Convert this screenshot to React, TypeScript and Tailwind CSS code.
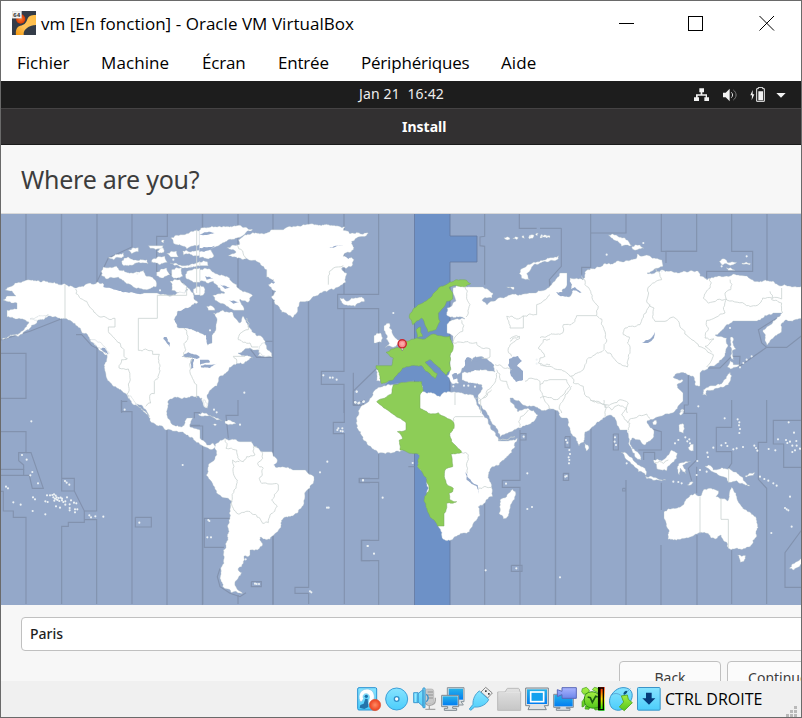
import React from "react";

/* ---------- map geometry ---------- */

type Pt = [number, number];

// Splits each edge and nudges the midpoints, so coasts look ragged.
// Edges that run exactly along an axis stay straight.
function coast(src: string, rough: number, min: number, closed: boolean): string {
  const pts: Pt[] = src.trim().split(/\s+/).map((p) => p.split(",").map(Number) as Pt);
  let seed = 7;
  const rnd = () => {
    seed = (seed * 16807) % 2147483647;
    return seed / 2147483647 - 0.5;
  };
  const out: Pt[] = [];
  const split = (a: Pt, b: Pt) => {
    const dx = b[0] - a[0];
    const dy = b[1] - a[1];
    const len = Math.hypot(dx, dy);
    if (len < min || dx === 0 || dy === 0) {
      out.push(b);
      return;
    }
    const k = (rnd() * rough * Math.min(len, min * 3)) / len;
    const m: Pt = [(a[0] + b[0]) / 2 - dy * k, (a[1] + b[1]) / 2 + dx * k];
    split(a, m);
    split(m, b);
  };
  out.push(pts[0]);
  for (let i = 1; i < pts.length; i++) split(pts[i - 1], pts[i]);
  if (closed) split(pts[pts.length - 1], pts[0]);
  return "M" + out.map((p) => p[0].toFixed(1) + " " + p[1].toFixed(1)).join("L") + (closed ? "Z" : "");
}

interface Sheet {
  at: Pt;
  scale: number;
  land?: string[];
  green?: string[];
  water?: string[];
  borders?: string[];
  zones?: string[];
  dots?: string;
}

const T = 1 / 3;

const SHEETS: Sheet[] = [
  {
    at: [0, 0],
    scale: 1,
    land: [
      "2,339 20,333 29,322 25,320 17,319 7,317 7,310 17,309 17,303 3,300 7,296 16,296 12,291 5,290 15,283 30,280 40,282 63,284 75,288 97,282 107,286 127,290 143,293 157,293 167,295 177,293 188,290 180,281 187,287 194,296 198,303 186,308 178,311 174,320 179,328 186,328 193,330 200,333 206,335 207,345 212,343 212,335 216,328 217,320 213,313 223,310 233,313 240,323 243,316 250,328 257,336 263,338 265,345 270,353 272,357 258,356 260,350 250,348 238,353 247,355 253,358 243,364 233,365 228,371 220,376 217,386 207,395 208,406 206,408 202,398 198,396 187,398 178,397 168,401 167,413 173,425 182,427 187,418 193,418 190,427 200,430 200,438 207,445 213,443 216,447 213,449 205,447 193,438 183,432 167,430 150,421 147,412 143,407 136,404 127,395 113,386 106,376 104,365 107,355 97,346 88,336 77,326 67,319 50,316 38,320 30,328 17,336",
      "453,288 462,285 470,287 483,287 493,293 492,298 482,300 487,305 497,299 510,295 532,293 545,290 550,286 555,281 560,273 567,273 567,285 560,294 569,297 572,291 570,278 583,280 587,270 602,266 617,261 635,259 637,254 650,256 662,260 663,266 647,273 663,270 673,272 698,271 700,276 707,280 720,276 733,274 747,276 753,280 773,281 778,285 803,286 803,318 787,320 782,323 780,333 767,345 763,330 773,321 782,313 773,313 763,318 757,321 733,321 722,330 715,335 727,338 728,346 720,360 712,366 700,373 700,386 695,385 693,376 688,375 680,373 673,377 683,380 677,385 683,393 683,401 675,411 669,414 655,418 647,421 647,423 654,432 653,438 645,445 640,440 632,438 630,443 640,455 641,460 635,457 629,445 627,430 620,430 613,417 610,415 603,418 585,432 584,442 579,446 570,430 567,418 562,418 555,410 540,409 523,405 513,398 510,398 512,403 518,412 528,408 538,415 532,422 520,428 500,437 498,433 487,413 478,402 478,395 482,385 473,383 462,380 462,373 473,371 483,370 495,372 494,365 483,357 473,358 465,366 461,372 457,376 459,383 453,384 447,376 450,370 450,356 453,346 453,336 447,333 447,325 453,320 465,319 448,316 447,308 456,301 453,293",
    ],
    water: [
      "176,317 180,311 188,308 198,303 203,304 205,309 212,310 215,318 215,326 211,334 212,342 207,344 206,335 200,332 190,329 179,327 175,322",
      "465,360 468,357 472,359 471,362 480,360 487,359 494,366 488,369 480,369 472,371 464,370",
      "509,359 518,356 522,361 517,366 523,371 523,380 516,382 511,376 510,369 508,365",
      "642,343 650,339 655,332 654,338 648,343",
    ],
  },
  {
    at: [0, 213],
    scale: T,
    land: [
      "305,188 310,162 350,160 358,172 380,178 430,172 440,190 465,200 468,222 440,230 400,222 380,212 355,192 320,198",
      "325,135 370,120 372,130 340,140", "365,145 385,132 410,142 440,140 445,152 400,155 372,158", "385,112 415,104 415,116 395,122",
      "445,98 490,98 482,108 450,106", "472,115 490,105 492,118 478,120", "458,138 495,130 502,148 480,155 455,148",
      "512,75 545,65 575,55 600,52 600,94 560,108 545,98 520,90", "500,122 530,115 535,132 512,132", "510,150 545,158 600,145 600,160 540,162",
      "470,178 500,165 510,185 490,195 470,188", "515,170 545,165 548,190 530,196 515,190", "556,185 570,172 600,165 600,208 580,208 560,198", "510,205 540,200 560,220 555,240 515,232",
      "548,114 570,117 600,110 600,128 550,127", "483,84 493,82 491,90", "580,228 600,222 600,246 584,246",
      "268,380 285,380 318,405 328,420 320,425 290,400", "382,545 400,560 450,610 440,600 425,590 400,575", "90,318 145,305 130,320 105,322",
    ],
    water: ["492,372 500,372 503,385 510,390 509,402 500,390 490,378", "545,432 565,418 590,425 600,432 590,438 565,433", "572,440 582,438 580,465 573,468", "300,408 315,405 325,425", "315,202 370,220 430,236 430,242 380,238 310,222"],
    borders: ["195,215 195,317", "227,228 228,242 260,265 278,290 300,312 345,316 345,342 325,342 325,355 340,372 360,390 372,410 372,430 382,437 365,440 357,465 385,468 386,520 380,545", "560,222 560,247 472,247 472,316 415,316 415,412 458,414 458,424 478,424 480,460 475,495 463,505 463,542 450,545 452,570 437,580", "552,345 560,360 563,380 552,392 557,410 550,430 578,435 570,460 575,490 590,515 590,555", "590,50 590,240"],
    zones: ["396,0 396,102 325,135 290,208", "502,0 502,70 470,70 470,175 520,185 560,222", "563,345 563,292 582,255", "0,382 90,355 185,317", "228,365 245,365 275,398 318,420", "3,421 78,421 78,556 3,556", "382,565 365,565 365,600"],
    dots: "412,182 480,232 520,140 573,160",
  },
  {
    at: [200, 213],
    scale: T,
    land: [
      "-2,52 10,44 60,40 110,38 158,50 135,62 110,75 80,85 50,100 30,108 38,120 40,132 20,137 -2,134",
      "0,148 22,146 25,158 0,158", "0,170 30,168 55,185 80,190 110,215 120,230 158,248 145,268 120,258 125,275 132,292 105,292 80,280 45,262 38,248 75,240 60,225 40,205 20,210 0,205",
      "0,217 15,230 10,246 0,248", "20,280 40,282 45,292 25,292",
      "80,105 118,95 115,80 135,65 200,60 215,50 250,50 270,40 330,33 380,34 435,42 430,52 450,62 505,60 470,75 455,85 460,110 430,130 462,140 455,160 425,165 440,180 437,208 415,222 400,230 360,240 330,262 300,266 290,300 278,314 262,303 245,298 228,275 215,250 228,235 205,215 222,200 200,193 200,170 180,150 140,136 85,128 108,118",
      "420,255 440,265 455,255 485,252 494,265 465,281 440,276 425,268",
      "178,400 195,390 200,408 215,420 215,432 190,428 175,418",
    ],
    borders: ["110,95 138,138", "140,315 145,350 120,362 115,380 130,388 150,390 155,402 175,402", "385,215 385,190 400,165 430,158", "135,430 100,430 110,450"],
    zones: ["536,0 536,244 413,244 413,287 536,287 536,455", "152,410 170,433 218,433", "195,385 218,385", "432,287 432,475 364,475 364,514 432,514 432,600", "460,577 490,577", "528,468 460,534 460,577"],
    water: ["0,440 25,440 30,448 0,455", "2,458 30,455 50,452 30,465 5,464", "115,420 140,420 155,425 125,428", "205,205 225,207 220,212", "430,128 455,130 445,138", "385,105 430,96 400,104", "-2,64 30,56 48,60 20,66", "-2,106 30,102 50,96 28,112 -2,116", "15,190 40,197 20,200", "60,215 90,225 75,228", "85,262 118,268 100,272"],
    dots: "133,539 370,487 390,494 398,494 410,500 470,536 465,568 476,570 490,567 42,590 50,598 30,352",
  },
  {
    at: [350, 213],
    scale: T,
    land: [
      "102,338 120,332 118,345 126,352 132,370 148,382 138,400 105,403 118,392 108,378 112,368 102,352", "72,368 92,360 98,375 94,388 72,390",
      "78,470 92,470 90,505 80,503", "508,182 520,165 550,148 600,134 626,128 625,137 570,150 545,162 530,182 540,202 515,196", "470,222 492,222 490,230",
      "462,74 480,76 478,80 466,79", "488,76 505,74 500,80", "515,72 522,68 524,76", "535,72 552,66 548,76 538,78", "556,64 565,61 562,68",
    ],
    green: [
      "180,302 205,275 240,255 265,225 300,207 318,200 350,202 362,212 345,222 310,218 298,222 308,240 308,258 290,265 282,282 265,300 270,325 258,350 235,358 222,325 215,315 188,335 178,315",
      "198,350 212,342 212,358 218,370 202,374",
      "152,388 172,385 200,375 225,378 250,363 300,370 310,400 300,430 302,470 288,487 270,465 240,440 225,448 262,482 255,497 215,458 180,460 158,465 145,480 130,500 95,512 88,480 78,466 78,458 125,458 130,435 108,418 118,415 125,408 150,405",
    ],
    borders: ["345,220 350,250 360,275 355,300 348,312", "335,322 338,355 315,372 310,390 380,388 395,405 420,408 420,432 395,435", "470,310 500,318 520,308 520,345 480,345 470,310", "520,310 560,305 560,275 600,245", "480,385 500,375 510,370", "485,430 475,405 490,388 510,375 500,368 480,378", "600,455 565,450 570,435 585,430 565,405 580,380 600,378", "435,455 460,465 485,470", "440,470 450,500 470,505 480,530", "525,505 550,497 570,505 570,530 580,550 600,590", "400,555 430,515 440,480", "375,555 392,560 392,600"],
    zones: ["508,0 508,46 560,46", "404,0 404,70 390,72 390,98 404,100 404,215", "600,205 600,222 615,212"],
    water: ["305,485 320,480 325,495 310,500", "335,515 350,510 375,512 375,520 350,520"],
    dots: "130,300 342,518 355,518 375,521 560,440 560,452 310,520 540,70 575,68 590,72",
  },
  {
    at: [540, 213],
    scale: T,
    land: [
      "205,66 230,67 255,75 275,97 245,100 225,82", "275,102 300,96 312,106 285,112", "538,145 555,138 562,148 590,147 580,155 545,156", "605,150 632,152 628,156 608,154", "558,164 585,172 565,172",
      "572,372 580,376 582,400 588,408 578,412 580,440 572,430 570,400", "570,443 580,455 598,455 590,462 572,468 562,462", "570,478 572,500 565,515 552,522 515,532 498,535 500,548 488,545 490,530 520,518 545,512 560,490", "0,70 30,68 30,74 0,75", "420,600 428,588 432,592 425,605",
    ],
    borders: ["0,374 68,360 70,335 100,330 110,308 170,308 185,318 192,350 200,380 192,410 165,425 140,440 130,470 90,490 60,470 45,468 30,460 0,455", "125,190 135,215 152,235 158,260 175,280 170,308", "195,412 225,440 262,462 265,430 270,410 262,390 268,372 250,365 255,345 300,335 318,300 330,275", "345,165 365,200 325,222 322,270 342,285 345,325 375,325 400,312 430,350 445,372 490,405 500,412 520,425 500,462", "508,195 510,225 490,255 505,270 560,258 555,300 500,322 505,345 495,375 522,378 495,400 515,418", "570,200 572,230 555,240 562,262 620,278 660,270 668,255 725,258 725,225", "690,235 695,260 725,270 728,300", "95,490 100,510 130,520 138,550 195,575 240,560 265,570 262,600", "0,515 30,500 80,500 90,520 75,540 45,560 0,555", "65,600 60,575 95,520"],
    zones: ["64,46 64,160 28,200 30,240", "0,46 64,46", "152,60 258,60 258,0", "152,0 152,163 125,163 125,185", "364,0 364,115 470,115", "470,0 470,115 378,115 378,150", "575,0 575,115 638,115 638,175 500,175 500,195", "720,310 655,350 665,390 680,403", "680,403 740,403 785,368", "445,485 445,575", "490,465 540,465 575,430 600,430 598,460 680,403"],
    water: ["48,238 78,240 85,252 62,250", "82,200 95,215 90,230 105,222 125,240 100,232 88,245 80,225"],
    dots: "620,130 545,160 200,125 310,90 365,175 570,345 600,463 610,450 620,440 635,430 475,580",
  },
  {
    at: [0, 400],
    scale: T,
    zones: ["3,95 78,95 78,158 56,158 56,182 71,195 71,208 3,208", "71,208 71,226 3,226", "78,158 93,158 130,265 97,265 88,226 71,226", "3,274 10,274 10,333 40,333 40,352 78,352 78,612", "185,235 223,235 223,273 185,273 185,0", "223,273 253,333 290,333 290,0", "253,333 253,367 205,367 205,379 185,379 185,612", "253,359 290,359 290,612", "364,0 364,35 396,35 396,612", "406,352 454,352 454,381 406,381 406,352", "600,38 583,38 583,55", "572,76 600,76"],
    dots: "94,64 66,165 80,179 97,216 91,226 114,250 18,260 24,265 40,307 62,314 99,292 105,298 98,333 136,343 136,304 143,306 141,286 150,286 157,285 162,283 167,287 160,292 165,296 170,298 176,294 182,293 186,301 178,303 170,292 190,306 196,314 201,292 163,302 173,300 186,296 196,304 168,319 180,323 209,313 209,324 213,301 222,308 229,310 225,328 232,328 225,337 209,331 195,243 200,248 208,254 268,346 273,352 286,349 310,350 418,368 374,29 548,195",
  },
  {
    at: [190, 400],
    scale: T,
    land: [
      "75,140 80,130 105,115 120,120 135,118 150,125 185,125 192,138 215,155 245,155 262,180 255,200 285,202 310,210 345,210 372,230 370,250 347,275 342,310 325,335 280,355 270,385 240,418 210,412 218,435 205,448 180,450 180,465 162,468 160,490 145,505 155,518 135,545 140,565 158,580 125,578 98,560 90,535 95,500 102,490 100,450 115,400 120,350 127,305 90,285 65,245 48,225 55,195 75,170 80,155",
      "25,43 50,40 75,52 97,62 80,60 50,48 30,47", "105,63 125,64 138,71 115,74 105,70", "38,0 45,0 52,25 42,20", "68,73 80,74 74,77",
    ],
    borders: ["105,118 108,145 140,150 148,180 160,185 170,170 195,165 190,140 200,140", "148,185 128,180 130,220 142,240 132,270 130,325 145,342 180,335 210,355 218,370 235,368 240,345 262,318 245,300 265,270 265,254 215,250 208,235 220,205 203,190 218,175 215,155"],
    zones: ["144,0 144,46 108,46 115,115", "0,78 38,78 38,612", "122,355 43,355 43,442 102,442", "249,0 249,612", "144,585 144,612", "90,505 82,530 90,560 120,580 150,590 168,578", "463,0 463,67 430,67 430,101 463,101 463,612", "184,545 214,545 214,560 184,560 184,545", "356,0 356,562 315,562 315,580 356,580 356,612", "540,235 508,235 508,248 540,248", "540,421 515,421 515,482 540,482", "492,0 492,16 520,16 520,0"],
    water: ["250,195 262,190 280,195 265,202"],
    dots: "412,185 390,217 411,323 416,323 519,241 533,438 55,360 58,363 52,412 63,412 445,85 452,93 457,85 458,94 442,90 195,551 200,552 207,552 360,574 364,577 497,8 505,10 520,5 150,74 167,478",
  },
  {
    at: [350, 370],
    scale: T,
    land: [
      "100,48 130,45 210,35 220,65 245,68 270,80 282,67 330,68 370,75 378,90 400,135 425,180 445,213 470,213 502,205 495,230 470,260 430,290 415,315 425,345 427,380 385,410 390,435 370,460 350,490 310,505 280,508 265,470 245,440 225,390 235,355 230,325 203,290 208,255 170,240 85,250 40,210 25,180 20,150 30,115 60,85 75,60",
      "488,358 497,375 485,400 475,438 460,446 447,430 450,390 470,380",
    ],
    green: ["130,45 180,35 215,35 220,62 210,75 210,115 235,130 265,128 310,155 312,175 300,190 305,215 335,248 303,252 308,290 285,300 283,320 292,345 310,355 308,365 297,370 300,390 320,395 290,400 287,425 282,430 282,468 262,468 245,445 222,390 237,355 230,325 203,290 208,255 180,250 150,240 148,210 158,205 142,185 168,180 168,158 80,95 125,72"],
    borders: ["315,68 315,105", "310,155 316,140 400,140", "335,248 355,255 350,280 352,310", "385,355 425,353", "425,60 385,95", "495,200 445,210", "510,170 512,140 535,120"],
    water: ["346,305 352,320 370,340 383,345 385,372 381,350 365,342 350,330"],
    zones: ["86,252 86,326 28,326 28,337 86,337 86,511 34,511 34,572 86,572 86,704", "404,400 404,704", "510,180 510,331 457,331 457,352 510,352 510,704", "510,191 528,191 528,210 510,210", "484,586 516,586 516,604 484,604 484,586", "10,8 10,105 45,90", "175,290 193,290"],
    dots: "188,279 39,331 98,383 53,528 72,551 407,601 499,595 468,341 532,310 532,417 546,411 521,200 20,65 16,96 28,98 42,94",
  },
  {
    at: [540, 400],
    scale: T,
    land: [
      "372,335 400,325 430,315 438,298 465,280 480,288 492,268 508,265 535,272 528,290 562,303 568,290 575,262 588,280 592,300 602,315 640,345 653,375 650,405 630,440 600,447 565,445 555,425 543,405 525,418 500,400 470,402 435,415 400,420 385,418 387,390 372,355",
      "593,465 604,469 617,467 612,484 601,487", "748,505 770,485 788,468 788,490 762,510", "495,198 515,200 520,210 545,203 570,207 595,222 608,232 630,258 605,250 590,242 568,247 550,230 530,220 510,210",
      "340,180 365,182 395,150 412,160 402,185 380,212 350,205", "243,157 262,163 290,190 315,205 318,226 295,215 270,185", "315,230 350,234 378,240 345,241 320,236", "412,200 425,188 452,184 428,196 438,222 428,215 420,205 418,224",
      "420,72 432,74 430,100 418,96", "445,142 460,133 460,153 448,150", "134,130 147,145 138,153", "428,28 422,46 418,40", "338,66 350,62 348,74 340,74", "615,228 645,218 640,226 618,232", "442,255 460,246 450,256",
    ],
    borders: ["480,290 480,400", "543,295 543,358 565,358 565,443", "566,205 566,248", "262,68 280,55 320,42 330,55", "192,0 195,50", "192,20 215,30 235,15 260,25 245,45 270,70 265,90", "150,0 200,18", "345,188 370,190 385,180"],
    zones: ["330,85 364,95 364,150 295,150", "311,180 311,157 344,157 344,180", "445,15 433,15 433,40 470,40 470,180 445,205 455,242", "575,0 575,82 529,82 529,155 575,155 575,190 565,205", "680,0 680,127 655,127 655,238 680,265 680,612", "785,61 700,61 700,132 731,132 731,202 785,202", "785,390 735,458 735,562 785,562", "364,248 364,330", "470,200 470,280", "575,450 575,612", "248,265 256,265 256,273 248,273 248,265", "220,102 235,102 235,150 220,150 220,102", "75,110 90,110 90,142 75,142 75,110", "70,220 86,220 86,241 70,241 70,220"],
    dots: "554,55 593,58 598,67 597,76 600,87 598,99 520,143 544,136 557,129 562,138 502,158 504,171 580,148 590,145 609,141 643,137 648,144 652,152 686,147 706,151 746,67 762,98 714,118 738,120 742,129 750,125 757,137 769,123 770,137 757,156 765,151 780,146 694,399 755,380 735,324 740,328 745,331 60,532 78,120 82,128 88,150 90,162 86,172 88,180 87,190 76,230 80,228 225,112 224,125 228,135 436,112 442,124 448,118 450,130 405,130 415,120 480,210 472,183 660,230 673,237 685,242 700,250 710,257 750,290 400,245 415,246 425,250 265,95 260,190 470,225 500,215",
  },
];

// Meridians as [x, end y] from the top edge, and [x, start y] to the bottom edge.
const TOP_MERIDIANS = [[26, 280], [61.5, 284], [97, 283], [238, 310], [273, 610], [308.5, 400], [344, 294], [767, 281]];
const LOW_MERIDIANS = [[202.5, 450], [555.5, 408], [591, 425], [626, 480], [661, 545], [697, 535], [167, 430]];

function WorldMap() {
  return (
    <svg className="block h-[391px] w-full" viewBox="1 214 800 391" preserveAspectRatio="none">
      <rect x="0" y="213" width="803" height="393" fill="#94a8c9" />
      <path d="M414.500 213H450V236H477V262H450V606H414.500Z" fill="#6d91c7" stroke="#64799f" strokeWidth=".8" />
      <path d="M385 385L398 372L405 364L425 362L445 373L447 382L450 394L442 397L422 390L418 380L393 384Z" fill="#6d91c7" />
      <g stroke="#8495b2" strokeWidth="1.4" fill="none">
        {TOP_MERIDIANS.map(([x, y]) => <path key={x + "t"} d={`M${x} 213V${y}`} />)}
        {LOW_MERIDIANS.map(([x, y]) => <path key={x + "l"} d={`M${x} ${y}V606`} />)}
        <path d="M61.500 319V400M97 347V400M202.500 213V230" />
      </g>
      {SHEETS.map((s, i) => (
        <g key={"z" + i} transform={`translate(${s.at[0]} ${s.at[1]}) scale(${s.scale})`} fill="none" stroke="#8292ae" strokeWidth="3.4">
          {s.zones?.map((z) => <path key={z} d={"M" + z.split(" ").join("L")} />)}
        </g>
      ))}
      {SHEETS.map((s, i) => (
        <g key={"s" + i} transform={`translate(${s.at[0]} ${s.at[1]}) scale(${s.scale})`}>
          {s.land?.map((l) => (
            <path key={l} d={coast(l, 0.42, s.scale === 1 ? 2 : 6, true)} fill="#fff" stroke="#b1bec5" strokeWidth={s.scale === 1 ? 0.35 : 1.05} />
          ))}
          {s.water?.map((l) => <path key={l} d={coast(l, 0.25, s.scale === 1 ? 2 : 6, true)} fill="#94a8c9" />)}
        </g>
      ))}
      {SHEETS.map((s, i) => (
        <g key={"b" + i} transform={`translate(${s.at[0]} ${s.at[1]}) scale(${s.scale})`}>
          {s.green?.map((l) => <path key={l} d={coast(l, 0.25, 7, true)} fill="#8dcd57" stroke="#75a65e" strokeWidth="1.5" />)}
          {s.borders?.map((l) => <path key={l} d={coast(l, 0.4, 8, false)} fill="none" stroke="#cbd4d2" strokeWidth="2.5" />)}
          {s.dots?.split(" ").map((d) => {
            const [x, y] = d.split(",").map(Number);
            return <circle key={d} cx={x} cy={y} r="3.2" fill="#edf2f5" />;
          })}
        </g>
      ))}
      <path d="M400.500 347L402.300 351L404 347Z" fill="#fff" stroke="#777" strokeWidth=".6" />
      <circle cx="402.2" cy="343.8" r="4.1" fill="#f58b8d" stroke="#c9252c" strokeWidth="1.4" />
      <circle cx="402.2" cy="343.8" r="2" fill="#fca9a7" />
    </svg>
  );
}

/* ---------- window chrome ---------- */

function VmLogo() {
  return (
    <svg className="size-6 shrink-0" viewBox="0 0 72 72">
      <defs>
        <linearGradient id="vmy" x1="1" y1="0" x2="0" y2="1"><stop stopColor="#ffbd45" /><stop offset=".6" stopColor="#ffc45a" /><stop offset="1" stopColor="#f5970b" /></linearGradient>
        <radialGradient id="vmo"><stop stopColor="#ff7a2f" /><stop offset="1" stopColor="#d83b02" /></radialGradient>
      </defs>
      <rect width="72" height="72" fill="#343c48" />
      <path d="M72 12C55 12 50 15 46 25C42 38 35 43 25 44C15 46 10 57 12 72H35C34 61 38 56 46 50C59 42 65 43 72 42Z" fill="url(#vmy)" />
      <circle cx="26" cy="24" r="14" fill="url(#vmo)" />
      <rect width="29" height="22" fill="#f4f4f4" stroke="#aaa" />
      <text x="3" y="17" className="font-['DejaVu_Sans'] text-[16px] font-bold" fill="#444">64</text>
    </svg>
  );
}

function StatusArea() {
  return (
    <svg className="h-4 w-[94px]" viewBox="876 258 282 48" fill="#f2f2f2">
      <path d="M892 262h14v12h-5v6h14v9h6v11h-14v-11h4v-5h-24v5h4v11h-15v-11h6v-9h14v-6h-4Z" />
      <path d="M963 275h8l12-12v38l-12-12h-8Z" />
      <path d="M988 274c5 4 5 12 0 16" fill="none" stroke="#ddd" strokeWidth="3" />
      <path d="M994 267c11 8 11 22 0 30" fill="none" stroke="#7d7d7d" strokeWidth="3" />
      <path d="M1052 267l-7 16h5l-1 15 8-18h-5Z" />
      <path d="M1064 263h5v-4h13v4h5v38h-23Z" fill="none" stroke="#f2f2f2" strokeWidth="3" />
      <path d="M1069 271h14v27h-14ZM1123 276h28l-14 14Z" />
    </svg>
  );
}

function WindowButtons() {
  return (
    <svg className="h-[17px] w-[156px]" viewBox="0 0 156 17" fill="none" stroke="#000" strokeWidth="1" shapeRendering="crispEdges">
      <path d="M0 8.500H15M69.500 1.500H83.500V15.500H69.500Z" />
      <path d="M140.500 1L155 15.500M155 1L140.500 15.500" shapeRendering="auto" />
    </svg>
  );
}

/* ---------- status bar icons ---------- */

function Ico({ children }: { children: React.ReactNode }) {
  return <svg className="size-6 shrink-0 overflow-visible" viewBox="0 0 72 72">{children}</svg>;
}

function StatusIcons() {
  return (
    <div className="flex items-center gap-1">
      <Ico>
        <defs>
          <linearGradient id="cy" x1="0" y1="0" x2="0" y2="1"><stop stopColor="#87e4ff" /><stop offset="1" stopColor="#4ccdfb" /></linearGradient>
          <linearGradient id="bl" x1="0" y1="0" x2="0" y2="1"><stop stopColor="#27b2e8" /><stop offset="1" stopColor="#007df2" /></linearGradient>
          <linearGradient id="gr" x1="0" y1="0" x2="0" y2="1"><stop stopColor="#e2e2e2" /><stop offset="1" stopColor="#c6c6c6" /></linearGradient>
          <linearGradient id="gn" x1="0" y1="0" x2="0" y2="1"><stop stopColor="#a5ef43" /><stop offset="1" stopColor="#53c51b" /></linearGradient>
          <linearGradient id="meter" x1="0" y1="0" x2="0" y2="1"><stop stopColor="#ff1300" /><stop offset=".5" stopColor="#ffe400" /><stop offset="1" stopColor="#00f500" /></linearGradient>
          <radialGradient id="rd"><stop stopColor="#ff8d66" /><stop offset="1" stopColor="#ec3e1c" /></radialGradient>
          <linearGradient id="vi" x1="0" y1="0" x2="0" y2="1"><stop stopColor="#a9b4ff" /><stop offset="1" stopColor="#6c86ea" /></linearGradient>
        </defs>
        <rect x="2" y="2" width="57" height="67" rx="4" fill="url(#cy)" stroke="#2a94d4" strokeWidth="3" />
        <path d="M30 6C44 6 52 17 52 29C52 42 43 51 33 51L36 36C40 30 36 20 27 20C19 20 16 29 20 35L12 46C0 33 6 6 30 6Z" fill="#fff" stroke="#7fc3e6" strokeWidth="2" />
        <circle cx="28" cy="28" r="5" fill="#1d6fa8" />
        <path d="M25 35L32 36L34 60L22 66L8 62L10 54L20 50Z" fill="#2474ab" />
        <circle cx="54" cy="54" r="17" fill="url(#rd)" stroke="#d95a3c" strokeWidth="2" />
      </Ico>
      <Ico><circle cx="35" cy="36" r="33" fill="url(#cy)" stroke="#3d9fd8" strokeWidth="3" /><circle cx="35" cy="36" r="7" fill="#fff" stroke="#2e8fc9" strokeWidth="4" /></Ico>
      <Ico>
        <rect x="36" y="6" width="26" height="44" rx="7" fill="#c9c9c9" stroke="#b0b0b0" strokeWidth="2" /><path d="M44 15h16M44 24h16M44 33h16M49 53v14M37 67h30M36 44c0 15 30 15 31-4v-8" fill="none" stroke="#a5a5a5" strokeWidth="4" />
        <path d="M2 17H15V47H2ZM15 20L30 8V58L15 45ZM30 3H36V62H30Z" fill="url(#cy)" stroke="#409bd1" strokeWidth="3" /><path d="M40 22c8 6 7 16 0 22" stroke="#368fc9" fill="none" strokeWidth="4" /><path d="M7 20v25" stroke="#b9f1ff" strokeWidth="2" />
      </Ico>
      <Ico>
        <path d="M19 2H69V44H60L67 54H36V44H19Z" fill="#dfe2e3" stroke="#889299" strokeWidth="3" /><rect x="23" y="5" width="43" height="33" fill="url(#bl)" />
        <path d="M2 25H53V59H35V64H47V70H10V64H20V59H2Z" fill="#dfe3e5" stroke="#7d878e" strokeWidth="3" /><rect x="5" y="28" width="45" height="27" fill="url(#bl)" />
      </Ico>
      <Ico>
        <path d="M36 15L50 1L70 18L56 33Z" fill="#eee" stroke="#888" strokeWidth="3" /><path d="M48 10h5v5h-5ZM57 18h5v5h-5Z" fill="#444" />
        <path d="M31 12L59 37C54 52 34 62 17 60L5 70L1 66L12 52C11 36 19 20 31 12Z" fill="url(#cy)" stroke="#4ba3d3" strokeWidth="3" />
      </Ico>
      <Ico><path d="M2 70V15H24L31 4H64Q68 4 68 12L71 16V70Z" fill="url(#gr)" stroke="#bbb" strokeWidth="3" /><path d="M5 17H70" stroke="#e8e8e8" strokeWidth="2" /></Ico>
      <Ico>
        <path d="M2 3H70V56H58L64 68H9L14 56H2Z" fill="#e1e2e3" stroke="#7c858d" strokeWidth="3" /><rect x="6" y="7" width="60" height="44" fill="url(#bl)" /><rect x="17" y="15" width="39" height="29" fill="#13a1ee" stroke="#fff" strokeWidth="5" />
      </Ico>
      <Ico>
        <path d="M2 22H61V61H40V64H51V70H10V64H21V61H2Z" fill="#d6dade" stroke="#828b93" strokeWidth="3" /><rect x="4" y="24" width="55" height="34" fill="url(#bl)" />
        <path d="M13 8L27 13V2H70V34H27V23L13 29Z" fill="url(#vi)" stroke="#5a68b8" strokeWidth="3" />
      </Ico>
      <Ico>
        <path d="M4 5L16 1L25 9L22 20L8 22L2 14ZM12 32L3 44L3 60L9 58L14 44ZM34 8L40 1L52 4V18ZM14 56L12 66L24 67L27 60ZM38 60L42 69L52 68V58Z" fill="url(#gn)" stroke="#3f9a1c" strokeWidth="2" />
        <path d="M14 22C24 12 42 12 52 22V60C40 66 22 64 14 54C8 44 9 30 14 22Z" fill="url(#gn)" stroke="#2f8a14" strokeWidth="3" />
        <path d="M20 30L28 32L34 46L44 28L50 30" fill="none" stroke="#1b5c10" strokeWidth="5" />
        <path d="M52 0H71V71H52Z" fill="url(#meter)" /><path d="M53 0V68H67V3H57V65" fill="none" stroke="#050500" strokeWidth="4" />
      </Ico>
      <Ico>
        <path d="M7 24C22 2 41-2 58 5C74 13 72 35 61 48C46 69 27 76 10 64C0 54-1 37 7 24Z" fill="url(#cy)" stroke="#3797cf" strokeWidth="3" /><path d="M7 24C27 10 43 31 59 48M39 28L64 5" fill="none" stroke="#5eabd9" strokeWidth="3" /><ellipse cx="49" cy="17" rx="4" ry="7" fill="#0b5282" transform="rotate(45 49 17)" />
        <path d="M37 27L55 24L58 37L70 47L46 71L31 60L44 45Z" fill="url(#gn)" stroke="#5cae2c" strokeWidth="3" />
      </Ico>
      <Ico><rect x="1.500" y="1.500" width="68" height="68" rx="3" fill="url(#cy)" stroke="#3993c8" strokeWidth="3" /><path d="M27 17H44V34H55L36 53L16 34H27Z" fill="#053a79" /></Ico>
    </div>
  );
}

const MENU = [
  { label: "Fichier", cls: "w-[84px]" },
  { label: "Machine", cls: "w-[101px] tracking-[0.1px]" },
  { label: "Écran", cls: "w-[76px] tracking-[-0.2px]" },
  { label: "Entrée", cls: "w-[83px] tracking-[-0.2px]" },
  { label: "Périphériques", cls: "w-[140px] tracking-[-0.2px]" },
  { label: "Aide", cls: "w-[60px] tracking-[0.1px]" },
];

export default function App() {
  return (
    <div className="flex h-[718px] w-[802px] flex-col overflow-hidden border border-[#6a6a6a] bg-white font-['Open_Sans',sans-serif] whitespace-nowrap text-black">
      <div className="flex h-11 shrink-0 items-center pr-[26px] pl-[11px]">
        <VmLogo />
        <span className="ml-[5px] grow pt-px text-[17px] tracking-[0.04px]">vm [En fonction] - Oracle VM VirtualBox</span>
        <WindowButtons />
      </div>
      <div className="flex h-9 shrink-0 items-center pl-4 text-[17px]">
        {MENU.map((m) => <span key={m.label} className={m.cls}>{m.label}</span>)}
      </div>

      <div className="flex h-[27px] shrink-0 items-center bg-[#1d1d1d] font-['Noto_Sans',sans-serif] text-[14px] text-[#ededed]">
        <span className="ml-[358px] grow pb-[2px] tracking-[0.15px]">Jan 21&nbsp; 16:42</span>
        <div className="mr-[13px] flex"><StatusArea /></div>
      </div>
      <div className="flex h-[37px] shrink-0 items-center border-t border-b border-t-[#454344] border-b-[#1b1b1b] bg-[#323031] pl-[401px] font-['Noto_Sans',sans-serif] text-[14px] font-bold text-white">
        Install
      </div>
      <div className="flex h-[69px] shrink-0 items-center border-b border-[#d9d9d9] bg-[#f7f7f7] pt-[2px] pl-5 font-['Noto_Sans',sans-serif] text-[25px] tracking-[-0.25px] text-[#3d3d3d]">
        <span>Where are you?</span>
      </div>
      <WorldMap />
      <div className="h-[76px] shrink-0 overflow-hidden bg-[#f7f7f7] pt-3 pl-5 font-['Noto_Sans',sans-serif]">
        <div className="flex h-[34px] w-[900px] items-center rounded-[4px] border border-[#c0c0c0] bg-white pb-[2px] pl-2 text-[14px] font-medium text-[#1d1d1d]">Paris</div>
        <div className="mt-[10px] ml-[598px] flex gap-[6px] text-[14px] text-[#3d3d3d]">
          <div className="flex h-[34px] w-[102px] shrink-0 items-center justify-center rounded-[4px] border border-[#c0c0c0] bg-[#fbfbfb] pb-[2px]">Back</div>
          <div className="flex h-[34px] w-[102px] shrink-0 items-center justify-center rounded-[4px] border border-[#c0c0c0] bg-[#fbfbfb] pb-[2px]">Continue</div>
        </div>
      </div>
      <div className="flex h-9 shrink-0 items-center bg-[#f0f0f0] pl-[356px]">
        <StatusIcons />
        <span className="ml-1 grow text-[16px]">CTRL DROITE</span>
        <svg className="mr-1 size-[11px] self-end" viewBox="0 0 11 11" fill="#b9b9b9"><path d="M8 0h3v3H8ZM4 4h3v3H4ZM8 4h3v3H8ZM0 8h3v3H0ZM4 8h3v3H4ZM8 8h3v3H8Z" /></svg>
      </div>
    </div>
  );
}
